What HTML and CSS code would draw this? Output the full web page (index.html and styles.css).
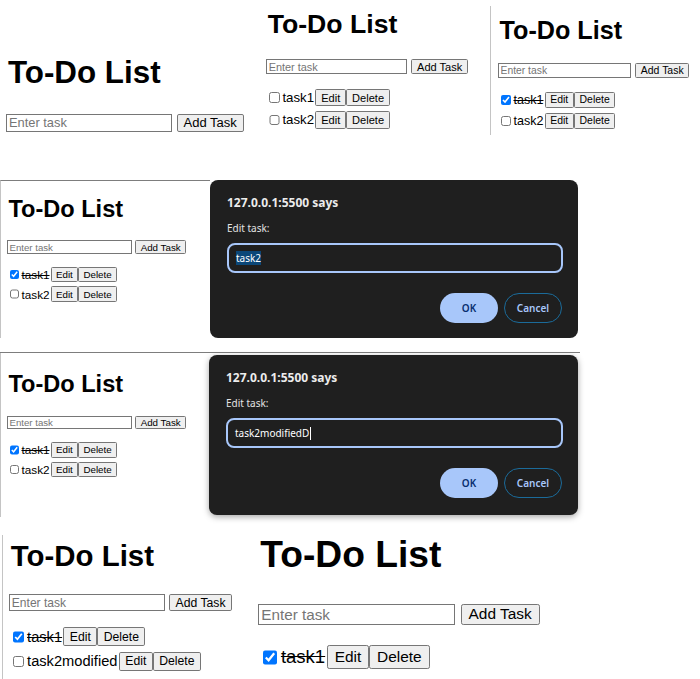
FILE: index.html
```html
<!DOCTYPE html>
<html lang="en">
<head>
<meta charset="utf-8">
<title>To-Do List collage</title>
<link rel="stylesheet" href="styles.css">
</head>
<body>
<div class="collage">
  <div class="row row1">
    <section class="todo pa">
      <h1>To-Do List</h1>
      <div class="add"><input class="field" placeholder="Enter task"><button class="btn">Add Task</button></div>
    </section>
    <section class="todo pb">
      <h1>To-Do List</h1>
      <div class="add"><input class="field" placeholder="Enter task"><button class="btn">Add Task</button></div>
      <ul class="tasks">
        <li><input type="checkbox" class="chk"><span>task1</span><button class="btn sm">Edit</button><button class="btn sm">Delete</button></li>
        <li><input type="checkbox" class="chk"><span>task2</span><button class="btn sm">Edit</button><button class="btn sm">Delete</button></li>
      </ul>
    </section>
    <section class="todo pc">
      <h1>To-Do List</h1>
      <div class="add"><input class="field" placeholder="Enter task"><button class="btn">Add Task</button></div>
      <ul class="tasks">
        <li><input type="checkbox" class="chk" checked><span class="done">task1</span><button class="btn sm">Edit</button><button class="btn sm">Delete</button></li>
        <li><input type="checkbox" class="chk"><span>task2</span><button class="btn sm">Edit</button><button class="btn sm">Delete</button></li>
      </ul>
    </section>
  </div>

  <div class="row row2">
    <section class="todo pd">
      <h1>To-Do List</h1>
      <div class="add"><input class="field" placeholder="Enter task"><button class="btn">Add Task</button></div>
      <ul class="tasks">
        <li><input type="checkbox" class="chk" checked><span class="done">task1</span><button class="btn sm">Edit</button><button class="btn sm">Delete</button></li>
        <li><input type="checkbox" class="chk"><span>task2</span><button class="btn sm">Edit</button><button class="btn sm">Delete</button></li>
      </ul>
    </section>
    <div class="dialog d1">
      <div class="d-title">127.0.0.1:5500 says</div>
      <div class="d-label">Edit task:</div>
      <div class="d-input"><span class="sel">task2</span></div>
      <div class="d-actions"><button class="d-ok">OK</button><button class="d-cancel">Cancel</button></div>
    </div>
  </div>

  <div class="row row3">
    <section class="todo pe">
      <h1>To-Do List</h1>
      <div class="add"><input class="field" placeholder="Enter task"><button class="btn">Add Task</button></div>
      <ul class="tasks">
        <li><input type="checkbox" class="chk" checked><span class="done">task1</span><button class="btn sm">Edit</button><button class="btn sm">Delete</button></li>
        <li><input type="checkbox" class="chk"><span>task2</span><button class="btn sm">Edit</button><button class="btn sm">Delete</button></li>
      </ul>
    </section>
    <div class="dialog d2">
      <div class="d-title">127.0.0.1:5500 says</div>
      <div class="d-label">Edit task:</div>
      <div class="d-input"><span>task2modifiedD</span><span class="caret"></span></div>
      <div class="d-actions"><button class="d-ok">OK</button><button class="d-cancel">Cancel</button></div>
    </div>
  </div>

  <div class="row row4">
    <section class="todo pf">
      <h1>To-Do List</h1>
      <div class="add"><input class="field" placeholder="Enter task"><button class="btn">Add Task</button></div>
      <ul class="tasks">
        <li><input type="checkbox" class="chk" checked><span class="done">task1</span><button class="btn sm">Edit</button><button class="btn sm">Delete</button></li>
        <li><input type="checkbox" class="chk"><span>task2modified</span><button class="btn sm">Edit</button><button class="btn sm">Delete</button></li>
      </ul>
    </section>
    <section class="todo pg">
      <h1>To-Do List</h1>
      <div class="add"><input class="field" placeholder="Enter task"><button class="btn">Add Task</button></div>
      <ul class="tasks">
        <li><input type="checkbox" class="chk" checked><span class="done">task1</span><button class="btn sm">Edit</button><button class="btn sm">Delete</button></li>
      </ul>
    </section>
  </div>
</div>
</body>
</html>
```

FILE: styles.css
```css
* { box-sizing: border-box; }
html, body { margin: 0; padding: 0; background: #fff; }
body {
  width: 700px;
  height: 679px;
  overflow: hidden;
  font-family: "Liberation Sans", Arial, sans-serif;
  color: #000;
}
.collage { display: flex; flex-direction: column; }
.row { display: flex; align-items: flex-start; }
.row1 { height: 180px; }
.row2 { height: 158px; }
.row3 { height: 165px; width: 580px; margin-top: 14px; border-top: 1px solid #7d7d7d; }
.row4 { height: 144px; margin-top: 18px; }

/* ---------- to-do app panel (scaled by --s) ---------- */
.todo { --s: 1; }
.todo h1 {
  margin: 0 0 calc(var(--s) * 26.6px);
  padding-left: calc(var(--s) * 2px);
  font-size: calc(var(--s) * 32.5px);
  line-height: 1;
  font-weight: bold;
}
.add { display: flex; align-items: center; gap: calc(var(--s) * 5px); }
.field {
  width: calc(var(--s) * 172px);
  height: calc(var(--s) * 18.5px);
  margin: 0;
  padding: 0 calc(var(--s) * 2px);
  font: calc(var(--s) * 13.33px) "Liberation Sans", Arial, sans-serif;
  border: 1px solid #767676;
  background: #fff;
}
.field::placeholder { color: #757575; }
.btn {
  height: calc(var(--s) * 18.5px);
  margin: 0;
  padding: 0 calc(var(--s) * 6px);
  font: calc(var(--s) * 13.5px) "Liberation Sans", Arial, sans-serif;
  color: #000;
  background: #efefef;
  border: 1px solid #767676;
  border-radius: calc(var(--s) * 2px);
}
.btn.sm { height: calc(var(--s) * 21px); }
.tasks {
  list-style: none;
  margin: calc(var(--s) * 18px) 0 0;
  padding: 0;
  display: flex;
  flex-direction: column;
  gap: calc(var(--s) * 6px);
}
.tasks li {
  display: flex;
  align-items: center;
  height: calc(var(--s) * 21px);
  font-size: calc(var(--s) * 16.2px);
  white-space: nowrap;
}
.tasks li span { margin-right: calc(var(--s) * 1.5px); }
.chk {
  width: calc(var(--s) * 13px);
  height: calc(var(--s) * 13px);
  margin: 0 calc(var(--s) * 3px) 0 calc(var(--s) * 4px);
}
.done { text-decoration: line-through; }

/* panel placement */
.pa { --s: 0.965; width: 258px; padding: 56.8px 0 0 6px; }
.pb { --s: 0.82; width: 228px; margin-left: 4px; padding: 10.8px 0 0 4px; }
.pc { --s: 0.775; flex: 1; height: 129px; margin-top: 6px; border-left: 1px solid #c4c4c4; padding: 11.6px 0 0 7px; }
.pd { --s: 0.725; width: 210px; height: 158px; border-top: 1px solid #7d7d7d; border-left: 1px solid #c4c4c4; padding: 16.6px 0 0 6px; }
.pe { --s: 0.725; width: 209px; height: 164px; border-left: 1px solid #c4c4c4; padding: 20px 0 0 6px; }
.pf { --s: 0.905; width: 253px; height: 144px; margin-left: 2px; border-left: 1px solid #c4c4c4; padding: 6px 0 0 6px; }
.pg { --s: 1.145; padding: 1px 0 0 3px; }

/* ---------- browser prompt dialog ---------- */
.dialog {
  background: #1f1f1f;
  border-radius: 8px;
  font-family: "Noto Sans", sans-serif;
  color: #e3e3e3;
  padding: 15px 15px 0 17px;
}
.d1 { width: 368px; height: 158px; }
.d2 { width: 369px; height: 160px; margin-top: 2px; box-shadow: 0 2px 6px rgba(0, 0, 0, 0.35); }
.d-title { font-size: 12px; line-height: 16px; font-weight: 700; color: #ececec; }
.d-label { font-size: 10px; line-height: 14px; margin-top: 10px; color: #e3e3e3; }
.d-input {
  margin-top: 8px;
  height: 30px;
  border: 2px solid #a8c7fa;
  border-radius: 8px;
  padding: 0 7px;
  display: flex;
  align-items: center;
  font-size: 10px;
  color: #fff;
}
.sel { background: #0b4778; }
.caret { display: inline-block; width: 1px; height: 13px; background: #fff; margin-left: 1px; }
.d-actions { display: flex; justify-content: flex-end; gap: 6px; margin-top: 20px; padding-right: 1px; }
.d-ok, .d-cancel {
  height: 30px;
  width: 58px;
  border-radius: 15px;
  font: 600 10px "Noto Sans", sans-serif;
  padding: 0;
}
.d-ok { background: #a8c7fa; color: #062e6f; border: 0; }
.d-cancel { background: transparent; color: #a8c7fa; border: 1px solid #1b6b9a; }
```
